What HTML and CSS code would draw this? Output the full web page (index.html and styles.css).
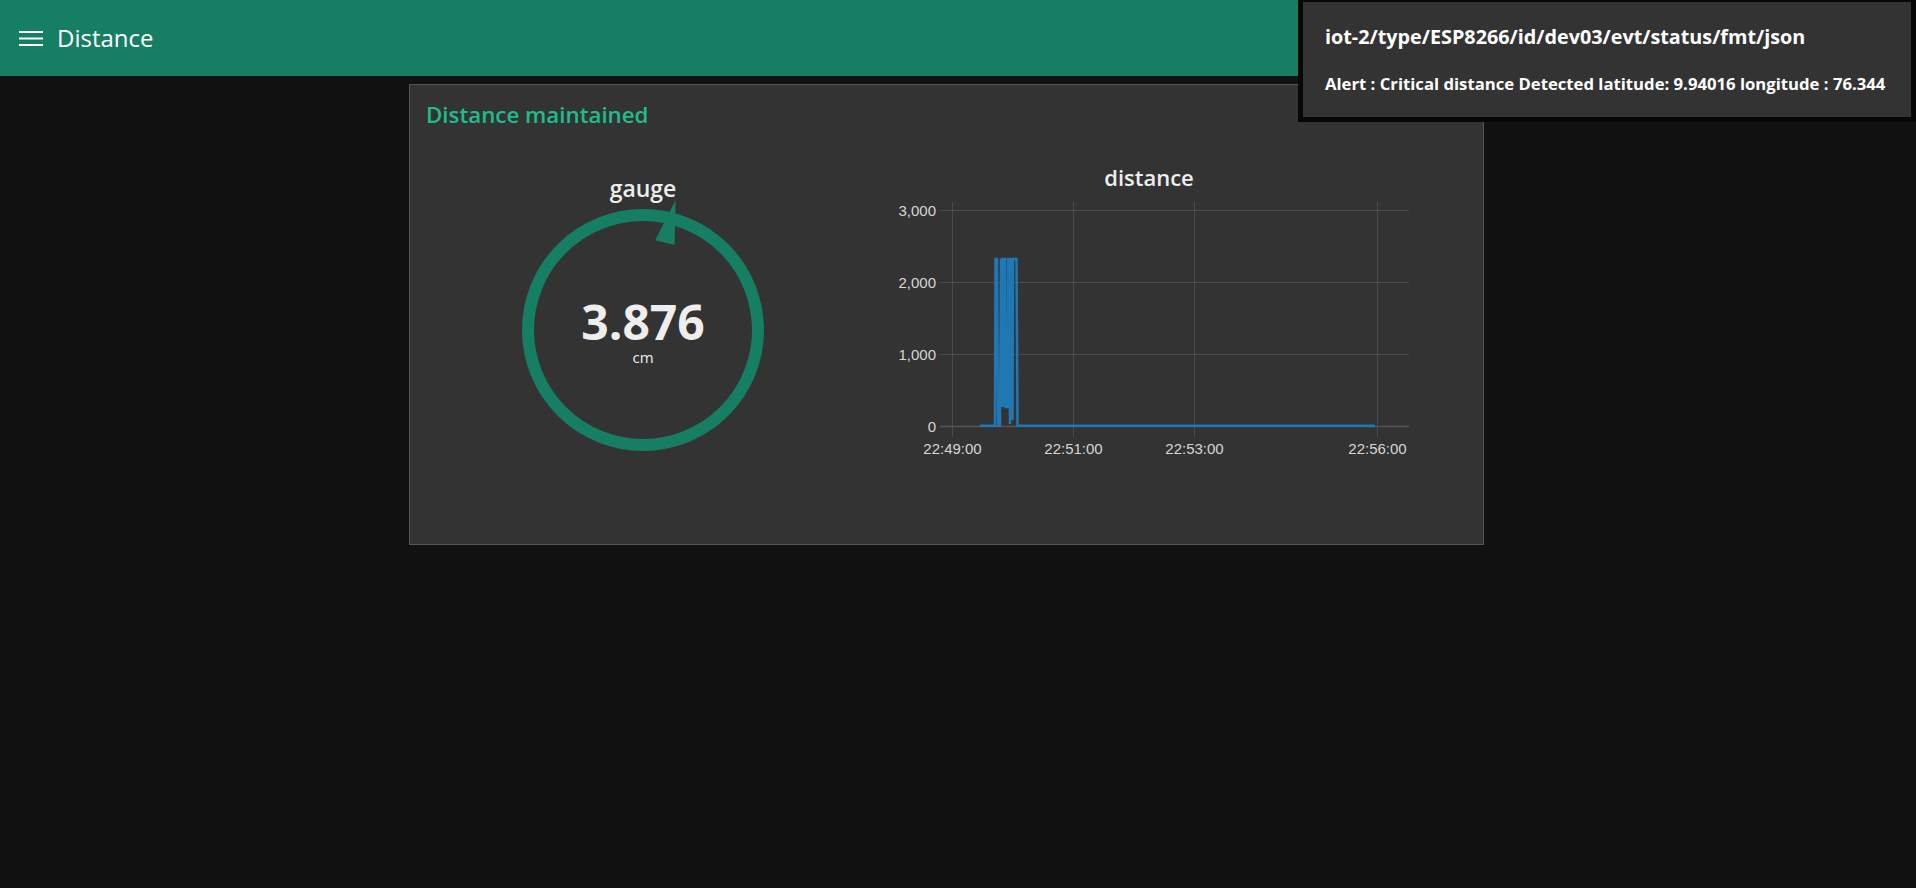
FILE: index.html
```html
<!DOCTYPE html>
<html lang="en">
<head>
<meta charset="utf-8">
<title>Distance</title>
<link rel="stylesheet" href="styles.css">
</head>
<body>
<header class="toolbar">
  <svg class="menu-icon" width="24" height="15" viewBox="0 0 24 15" aria-hidden="true">
    <rect x="0" y="0" width="24" height="2" fill="#ffffff"/>
    <rect x="0" y="6.5" width="24" height="2" fill="#ffffff"/>
    <rect x="0" y="13" width="24" height="2" fill="#ffffff"/>
  </svg>
  <h1 class="toolbar-title">Distance</h1>
</header>

<main class="content">
  <section class="card">
    <h2 class="card-title">Distance maintained</h2>
    <div class="card-body">
      <div class="gauge-widget">
        <div class="widget-title">gauge</div>
        <svg class="gauge-svg" width="250" height="250" viewBox="0 0 250 250">
          <circle cx="125" cy="125" r="115" fill="none" stroke="#167e63" stroke-width="12"/>
          <polygon points="157.6,-5 137.2,35.3 156.6,40.1" fill="#167e63"/>
          <text class="gauge-value" x="125" y="135" text-anchor="middle">3.876</text>
          <text class="gauge-unit" x="125" y="158" text-anchor="middle">cm</text>
        </svg>
      </div>
      <div class="chart-widget">
        <div class="widget-title chart-title">distance</div>
        <svg class="chart-svg" width="538" height="265" viewBox="0 0 538 265">
          <g class="grid">
            <line x1="60" y1="10.5" x2="529" y2="10.5"/>
            <line x1="60" y1="82.5" x2="529" y2="82.5"/>
            <line x1="60" y1="154.5" x2="529" y2="154.5"/>
            <line x1="72.5" y1="2" x2="72.5" y2="237"/>
            <line x1="193.5" y1="2" x2="193.5" y2="237"/>
            <line x1="314.5" y1="2" x2="314.5" y2="237"/>
            <line x1="497.5" y1="2" x2="497.5" y2="237"/>
          </g>
          <line class="zero-line" x1="60" y1="226.5" x2="529" y2="226.5"/>
          <g class="y-labels">
            <text x="56" y="15.5">3,000</text>
            <text x="56" y="87.5">2,000</text>
            <text x="56" y="159.5">1,000</text>
            <text x="56" y="231.5">0</text>
          </g>
          <g class="x-labels">
            <text x="72.5" y="253.5">22:49:00</text>
            <text x="193.5" y="253.5">22:51:00</text>
            <text x="314.5" y="253.5">22:53:00</text>
            <text x="497.5" y="253.5">22:56:00</text>
          </g>
          <polyline class="series" points="100,225.7 115,225.7 115.5,59 117,59 118,225.7 120,225.7 121,59 121.5,207 122,59 123,59 123.5,207 124,59 125,59 125.5,207 127.5,207 128,59 129,59 130,224 130.5,59 132,59 132.5,220 133,59 136.5,59 137.5,225.7 495,225.7"/>
        </svg>
      </div>
    </div>
  </section>
</main>

<div class="toast">
  <div class="toast-topic">iot-2/type/ESP8266/id/dev03/evt/status/fmt/json</div>
  <div class="toast-msg">Alert : Critical distance Detected latitude: 9.94016 longitude : 76.344</div>
</div>
</body>
</html>
```

FILE: styles.css
```css
* { box-sizing: border-box; }

html, body {
  margin: 0;
  padding: 0;
  background: #111111;
  font-family: "Open Sans", "Noto Sans", sans-serif;
  color: #eeeeee;
}

body {
  width: 1916px;
  height: 888px;
  overflow: hidden;
  position: relative;
}

.toolbar {
  height: 76px;
  background: #167e63;
  display: flex;
  align-items: center;
  padding-left: 19px;
}

.menu-icon { display: block; flex: none; }

.toolbar-title {
  margin: 0 0 0 14px;
  font-size: 24px;
  font-weight: 400;
  color: #ffffff;
  line-height: 30px;
}

.content {
  padding: 8px 0 0 409px;
}

.card {
  width: 1075px;
  height: 461px;
  background: #333333;
  border: 1px solid #555555;
}

.card-title {
  margin: 0;
  padding: 14px 16px 0;
  font-size: 22.3px;
  font-weight: 600;
  line-height: 32px;
  color: #1fbc8c;
}

.card-body {
  display: flex;
  align-items: flex-start;
  padding: 31px 0 0 103px;
}

.gauge-widget {
  width: 260px;
  margin-top: 11px;
  display: flex;
  flex-direction: column;
  align-items: center;
}

.widget-title {
  font-size: 23px;
  font-weight: 600;
  line-height: 30px;
  color: #eeeeee;
  text-align: center;
}

.chart-title { font-size: 22px; }

.gauge-svg {
  display: block;
  margin-top: 2px;
  overflow: visible;
}

.gauge-value {
  font-family: "Open Sans", sans-serif;
  font-size: 48px;
  font-weight: 700;
  fill: #eeeeee;
}

.gauge-unit {
  font-family: "Open Sans", sans-serif;
  font-size: 15px;
  fill: #eeeeee;
}

.chart-widget {
  width: 538px;
  margin-left: 107px;
  display: flex;
  flex-direction: column;
}

.chart-title { margin-bottom: 8px; }

.chart-svg { display: block; }

.grid line {
  stroke: #4b4b4b;
  stroke-width: 1;
}

.zero-line {
  stroke: #555555;
  stroke-width: 1.5;
}

.y-labels text {
  font-family: "Liberation Sans", Arial, sans-serif;
  font-size: 15px;
  fill: #d6d6d6;
  text-anchor: end;
}

.x-labels text {
  font-family: "Liberation Sans", Arial, sans-serif;
  font-size: 15px;
  fill: #d6d6d6;
  text-anchor: middle;
}

.series {
  fill: none;
  stroke: #1f77b4;
  stroke-width: 2.5;
  stroke-linejoin: miter;
}

.toast {
  position: absolute;
  top: 0;
  right: 0;
  width: 618px;
  height: 122px;
  background: #333333;
  border: 5px solid rgba(0, 0, 0, 0.85);
  border-top-width: 2px;
  padding: 22px 0 0 22px;
  color: #ffffff;
  font-weight: 700;
}

.toast-topic {
  font-size: 19.8px;
  line-height: 26px;
  white-space: nowrap;
}

.toast-msg {
  margin-top: 23px;
  font-size: 16.7px;
  line-height: 22px;
  white-space: nowrap;
}
```
